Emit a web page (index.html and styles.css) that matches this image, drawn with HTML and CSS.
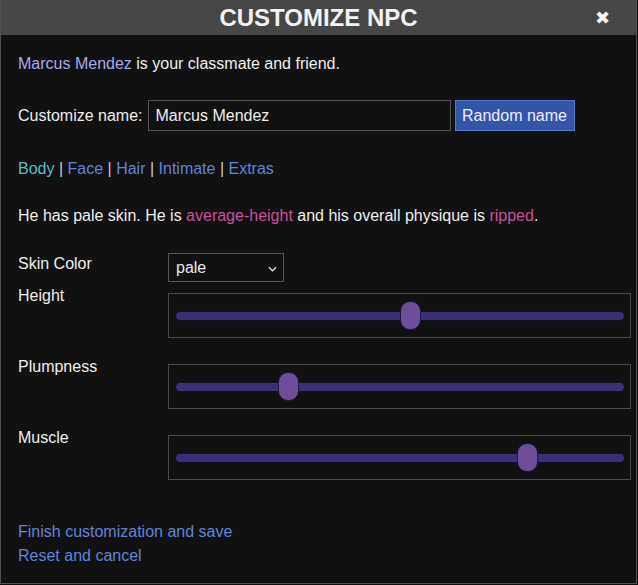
FILE: index.html
```html
<!DOCTYPE html>
<html lang="en">
<head>
  <meta charset="UTF-8" />
  <title>Customize NPC</title>
  <link rel="stylesheet" href="styles.css">
</head>
<body>

  <div class="window">
    <div class="titlebar">
      <span class="title">CUSTOMIZE NPC</span>
      <span class="close">&#x2716;</span>
    </div>

    <div class="content">
      <p class="intro"><span class="npc-name">Marcus Mendez</span> is your classmate and friend.</p>

      <div class="name-row">
        <label for="npcName">Customize name:</label>
        <input type="text" id="npcName" value="Marcus Mendez">
        <button class="random-btn">Random name</button>
      </div>

      <div class="tabs">
        <a class="tab active">Body</a> | <a class="tab">Face</a> | <a class="tab">Hair</a> | <a class="tab">Intimate</a> | <a class="tab">Extras</a>
      </div>

      <p class="desc">He has pale skin. He is <span class="trait">average-height</span> and his overall physique is <span class="trait">ripped</span>.</p>

      <div class="options">
        <div class="opt-label skin-label">Skin Color</div>
        <div class="select-wrap">
          <select>
            <option>pale</option>
            <option>fair</option>
            <option>tan</option>
            <option>dark</option>
          </select>
          <svg class="chevron" viewBox="0 0 10 6"><path d="M1 1l4 4 4-4"/></svg>
        </div>

        <div class="opt-label">Height</div>
        <div class="slider-box"><input type="range" min="0" max="100" step="0.1" value="52.5"></div>

        <div class="opt-label">Plumpness</div>
        <div class="slider-box"><input type="range" min="0" max="100" step="0.1" value="24"></div>

        <div class="opt-label">Muscle</div>
        <div class="slider-box"><input type="range" min="0" max="100" step="0.1" value="79.8"></div>
      </div>

      <div class="links">
        <a>Finish customization and save</a>
        <a>Reset and cancel</a>
      </div>
    </div>
  </div>

</body>
</html>
```

FILE: styles.css
```css
* {
  box-sizing: border-box;
}

body {
  margin: 0;
  background-color: #111;
  font-family: Arial, "Liberation Sans", sans-serif;
  font-size: 16px;
  color: #eee;
}

.window {
  width: 637px;
  height: 584px;
  border: 1px solid #505050;
  border-top: none;
  background-color: #111;
}

.titlebar {
  position: relative;
  height: 35px;
  background-color: #464646;
  display: flex;
  align-items: center;
  justify-content: center;
}

.title {
  font-size: 24px;
  font-weight: bold;
  color: #f2f2f2;
}

.close {
  position: absolute;
  right: 26px;
  top: 7px;
  font-size: 18px;
  color: #f4f4f4;
}

.content {
  padding: 20px 0 0 17px;
}

p {
  margin: 0;
  line-height: 18px;
}

.npc-name {
  color: #a7a9e6;
}

.name-row {
  display: flex;
  align-items: center;
  margin-top: 27px;
}

.name-row label {
  margin-right: 5px;
}

.name-row input {
  width: 303px;
  height: 31px;
  background: #111;
  border: 1px solid #555;
  color: #eee;
  font-family: inherit;
  font-size: 16px;
  padding: 0 7px;
  outline: none;
}

.random-btn {
  margin-left: 4px;
  width: 120px;
  height: 31px;
  background-color: #3455a8;
  border: 1px solid #5577cc;
  color: #eef;
  font-family: inherit;
  font-size: 16px;
  padding: 0;
}

.tabs {
  margin-top: 29px;
  line-height: 18px;
  color: #ccc;
}

.tab {
  color: #5f84d8;
}

.tab.active {
  color: #5bbcc8;
}

.desc {
  margin-top: 29px;
}

.trait {
  color: #c9509a;
}

.options {
  display: grid;
  grid-template-columns: 150px 463px;
  margin-top: 28px;
}

.opt-label {
  line-height: 18px;
  padding-top: 1px;
}

.skin-label {
  padding-top: 2px;
}

.select-wrap {
  position: relative;
  width: 116px;
  height: 29px;
  margin-bottom: 4px;
}

.select-wrap select {
  appearance: none;
  -webkit-appearance: none;
  width: 116px;
  height: 29px;
  background: #111;
  border: 1px solid #555;
  color: #e8e8e8;
  font-family: inherit;
  font-size: 16px;
  padding: 0 7px;
  outline: none;
}

.chevron {
  position: absolute;
  right: 7px;
  top: 13px;
  width: 9px;
  height: 6px;
  fill: none;
  stroke: #ddd;
  stroke-width: 1.4;
  pointer-events: none;
}

.slider-box {
  height: 45px;
  margin: 7px 0 19px;
  border: 1px solid #4a4a4a;
  padding: 0 5px 0 6px;
  display: flex;
  align-items: center;
}

.slider-box input[type=range] {
  -webkit-appearance: none;
  appearance: none;
  width: 100%;
  height: 28px;
  margin: 0;
  background: transparent;
}

.slider-box input[type=range]::-webkit-slider-runnable-track {
  height: 10px;
  background: #3c2e7a;
  border: 1px solid #151125;
  border-radius: 5px;
}

.slider-box input[type=range]::-webkit-slider-thumb {
  -webkit-appearance: none;
  width: 21px;
  height: 29px;
  margin-top: -10.5px;
  background: #6d4e99;
  border: 1px solid #22173d;
  border-radius: 10px;
}

.links {
  display: flex;
  flex-direction: column;
  margin-top: 21px;
  line-height: 24px;
}

.links a {
  color: #5f84d8;
}
```
